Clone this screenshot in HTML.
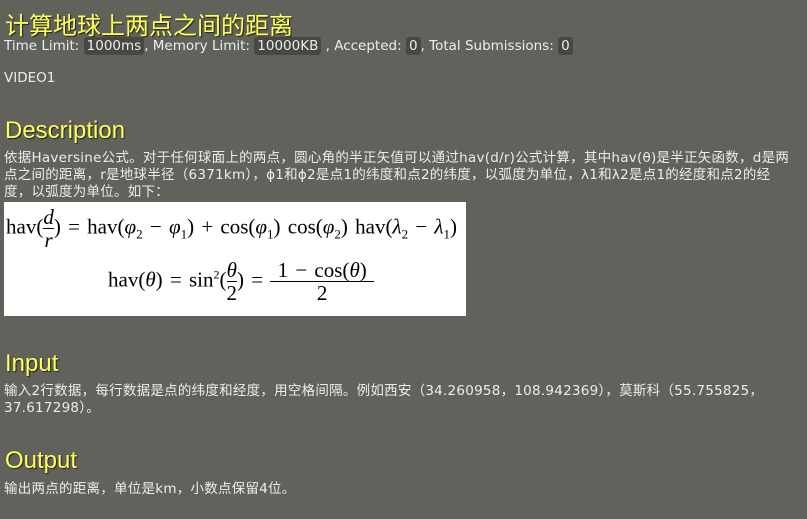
<!DOCTYPE html>
<html><head><meta charset="utf-8"><style>
html,body{margin:0;padding:0;}
body{width:807px;height:519px;background:#62625d;color:#ececec;font-family:"DejaVu Sans","Noto Sans CJK SC",sans-serif;font-size:13.5px;position:relative;overflow:hidden;}
.h{position:absolute;left:5px;color:#ffff5a;text-shadow:1px 1px 1px #222;font-size:24px;white-space:nowrap;font-family:"Liberation Sans","Noto Sans CJK SC",sans-serif;}
.t{position:absolute;left:4px;white-space:nowrap;line-height:17px;}
.p{letter-spacing:0.25px;}
code{background:#474743;border-radius:3px;padding:1px 3px;font-family:"DejaVu Sans",sans-serif;font-size:13.5px;}
.img{position:absolute;left:4px;top:202px;width:462px;height:114px;background:#fff;color:#000;font-family:"Liberation Serif","DejaVu Serif",serif;font-size:21px;}
.m{position:absolute;white-space:nowrap;}
.fr{display:inline-block;vertical-align:middle;text-align:center;}
.fr span{display:block;line-height:22px;}
.fr .n{border-bottom:1px solid #000;}
i{font-style:italic;}
sub{font-size:13px;}
sup{font-size:12px;}
</style></head><body>
<div class="h" style="top:6px;font-family:'DejaVu Sans','Noto Sans CJK SC',sans-serif;">计算地球上两点之间的距离</div>
<div class="t" style="top:38px;">Time Limit: <code>1000ms</code>, Memory Limit: <code>10000KB</code> , Accepted: <code>0</code>, Total Submissions: <code>0</code></div>
<div class="t" style="top:70px;">VIDEO1</div>
<div class="h" style="top:117px;">Description</div>
<div class="t p" style="top:150px;">依据Haversine公式。对于任何球面上的两点，圆心角的半正矢值可以通过hav(d/r)公式计算，其中hav(θ)是半正矢函数，d是两<br>点之间的距离，r是地球半径（6371km），ϕ1和ϕ2是点1的纬度和点2的纬度，以弧度为单位，λ1和λ2是点1的经度和点2的经<br>度，以弧度为单位。如下：</div>
<div class="img">
 <div class="m" style="left:2px;top:4px;word-spacing:2px;">hav(<span class="fr"><span class="n"><i>d</i></span><span><i>r</i></span></span>) = hav(<i>φ</i><sub>2</sub> − <i>φ</i><sub>1</sub>) + cos(<i>φ</i><sub>1</sub>) cos(<i>φ</i><sub>2</sub>) hav(<i>λ</i><sub>2</sub> − <i>λ</i><sub>1</sub>)</div>
 <div class="m" style="left:104px;top:57px;word-spacing:2px;">hav(<i>θ</i>) = sin<sup>2</sup>(<span class="fr"><span class="n"><i>θ</i></span><span>2</span></span>) = <span class="fr"><span class="n">&nbsp;1 − cos(<i>θ</i>)&nbsp;</span><span>2</span></span></div>
</div>
<div class="h" style="top:350px;">Input</div>
<div class="t p" style="top:383px;">输入2行数据，每行数据是点的纬度和经度，用空格间隔。例如西安（34.260958，108.942369），莫斯科（55.755825，<br>37.617298）。</div>
<div class="h" style="top:447px;">Output</div>
<div class="t p" style="top:481px;">输出两点的距离，单位是km，小数点保留4位。</div>
</body></html>
